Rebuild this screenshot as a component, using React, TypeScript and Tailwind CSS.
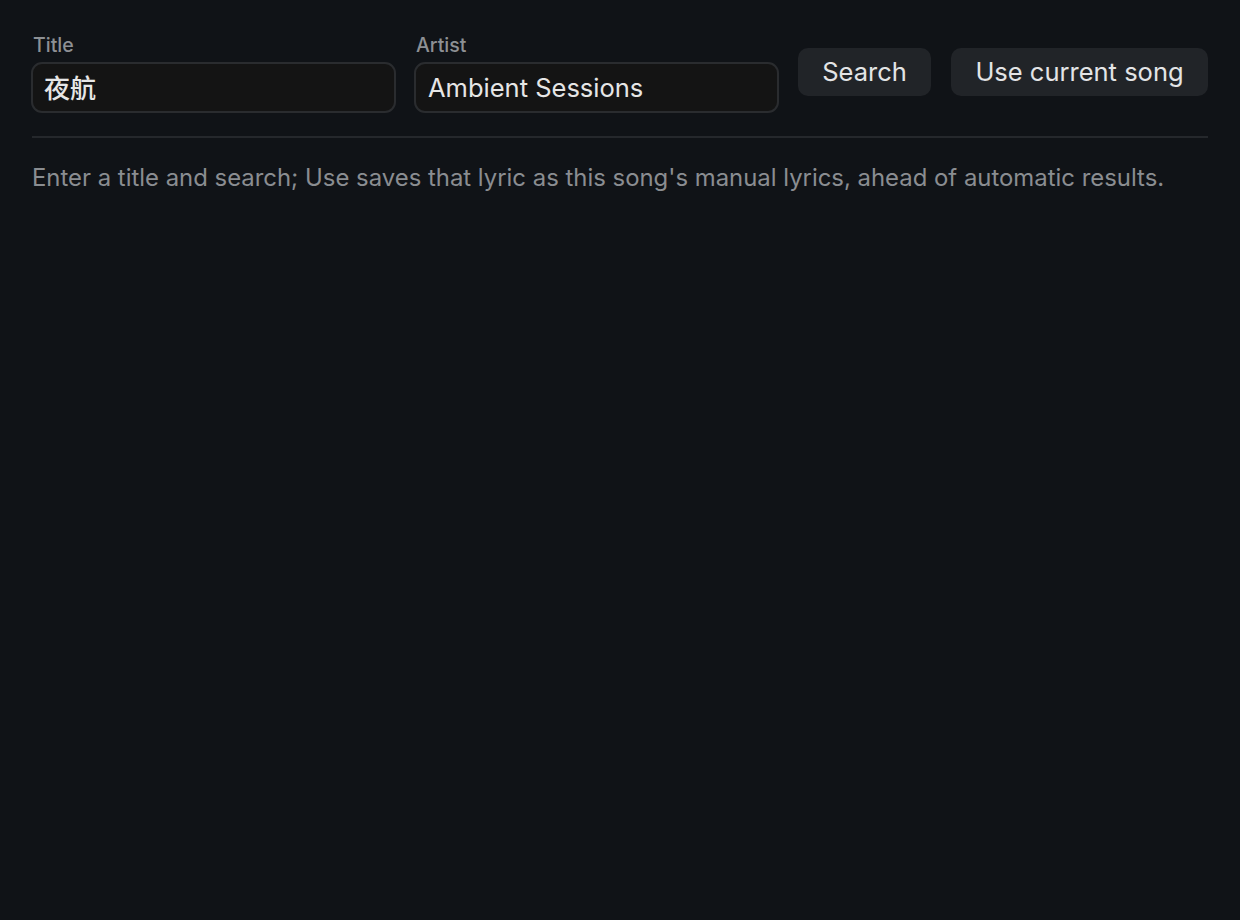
export default function App() {
  const font = { fontFamily: 'Inter, "Noto Sans CJK SC", sans-serif' };
  return (
    <div className="min-h-[920px] w-full bg-[#101317] pl-[31px] pr-8 pt-[33px]" style={font}>
      <div className="flex items-center">
        <div className="flex flex-col w-[365px] shrink-0">
          <label className="pl-[2px] text-[19.5px] leading-[24px] text-[#8d9094] font-medium">Title</label>
          <div className="mt-[5px] h-[51px] rounded-[11px] border-2 border-[#2a2c2f] bg-[#141414] flex items-center pt-[2px] px-[11px] text-[26px] text-[#e6e6e6] font-medium whitespace-nowrap">
            夜航
          </div>
        </div>
        <div className="flex flex-col w-[365px] ml-[18px] shrink-0">
          <label className="pl-[2px] text-[19.5px] leading-[24px] text-[#8d9094] font-medium">Artist</label>
          <div className="mt-[5px] h-[51px] rounded-[11px] border-2 border-[#2a2c2f] bg-[#141414] flex items-center pt-[2px] px-[12px] text-[25.5px] text-[#e6e6e6] whitespace-nowrap">
            Ambient Sessions
          </div>
        </div>
        <button className="ml-[19px] -mt-[3px] h-[48px] w-[133px] pt-px shrink-0 rounded-[10px] bg-[#212428] text-[25.5px] text-[#e3e4e6] whitespace-nowrap">
          Search
        </button>
        <button className="ml-5 -mt-[3px] h-[48px] w-[257px] pt-px shrink-0 rounded-[10px] bg-[#212428] text-[25.5px] text-[#e3e4e6] whitespace-nowrap">
          Use current song
        </button>
      </div>
      <div className="ml-px mt-[23px] h-[2px] bg-[#25282c]" />
      <p className="ml-px mt-[24px] text-[23.9px] leading-[32px] text-[#8a8d91] whitespace-nowrap">
        Enter a title and search; Use saves that lyric as this song's manual lyrics, ahead of automatic results.
      </p>
    </div>
  );
}
